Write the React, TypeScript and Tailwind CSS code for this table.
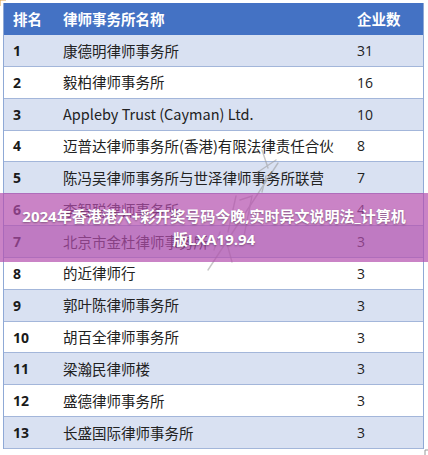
import React from "react";

const rows: [string, string, string][] = [
  ["1", "康德明律师事务所", "31"],
  ["2", "毅柏律师事务所", "16"],
  ["3", "Appleby Trust (Cayman) Ltd.", "10"],
  ["4", "迈普达律师事务所(香港)有限法律责任合伙", "8"],
  ["5", "陈冯吴律师事务所与世泽律师事务所联营", "7"],
  ["6", "李智聪律师事务所", "4"],
  ["7", "北京市金杜律师事务所", "3"],
  ["8", "的近律师行", "3"],
  ["9", "郭叶陈律师事务所", "3"],
  ["10", "胡百全律师事务所", "3"],
  ["11", "梁瀚民律师楼", "3"],
  ["12", "盛德律师事务所", "3"],
  ["13", "长盛国际律师事务所", "3"],
];

export default function App() {
  return (
    <div className="relative w-[428px] h-[455px] bg-white overflow-hidden">
      <div className="pt-[3px] pl-[3px] w-[424px]">
        <div className="border-x border-[#8fa9d6]">
          <div
            className="flex items-center h-[32px] bg-[#4472c4] text-white font-bold text-[14.5px]"
            style={{ fontFamily: '"Noto Sans CJK SC", sans-serif' }}
          >
            <div className="w-[59px] pl-[9px]">排名</div>
            <div className="flex-1">律师事务所名称</div>
            <div className="w-[66px]">企业数</div>
          </div>
          {rows.map(([r, n, c], i) => (
            <div
              key={r}
              className={
                "flex items-center h-[31.85px] border-b border-[#a3b6da] " +
                (i % 2 === 0 ? "bg-[#d9e1f2]" : "bg-white")
              }
            >
              <div
                className="w-[59px] pl-[9px] font-bold text-[14px] text-[#1a1a1a]"
                style={{ fontFamily: '"Open Sans", sans-serif' }}
              >
                {r}
              </div>
              <div
                className="flex-1 text-[14.5px] text-[#222] whitespace-nowrap"
                style={{ fontFamily: '"Noto Sans CJK SC", sans-serif' }}
              >
                {n}
              </div>
              <div
                className="w-[66px] text-[14px] text-[#222]"
                style={{ fontFamily: '"Open Sans", sans-serif' }}
              >
                {c}
              </div>
            </div>
          ))}
        </div>
      </div>

      <svg
        className="absolute left-0 top-0 pointer-events-none"
        width="428"
        height="455"
        viewBox="0 0 428 455"
      >
        <g stroke="#9a9a9a" strokeWidth="1.4" fill="none" opacity="0.55" strokeLinecap="round">
          <path d="M278 163 L208 270" />
          <path d="M262 150 L268 168 M258 172 L276 160 M266 176 L262 192" />
          <path d="M236 196 L228 232 M240 200 L252 196 L244 236" />
          <path d="M220 232 L214 250 M226 240 L232 262" />
        </g>
        <path d="M0 6 L0 0 L6 0" stroke="#e0a040" strokeWidth="1" fill="none" />
        <path d="M425 455 L425 450 L428 450" stroke="#999" strokeWidth="1" fill="none" />
      </svg>

      <div
        className="absolute left-0 top-[193px] w-[428px] h-[69px] bg-[#b34fae]/70 flex flex-col items-center justify-center text-white font-bold text-[15px] leading-[23px] [text-shadow:0_1px_2px_rgba(0,0,0,0.35)]"
        style={{ fontFamily: '"Open Sans", "Noto Sans CJK SC", sans-serif' }}
      >
        <div className="whitespace-nowrap">2024年香港港六+彩开奖号码今晚,实时异文说明法_计算机</div>
        <div className="whitespace-nowrap">版LXA19.94</div>
      </div>
    </div>
  );
}
